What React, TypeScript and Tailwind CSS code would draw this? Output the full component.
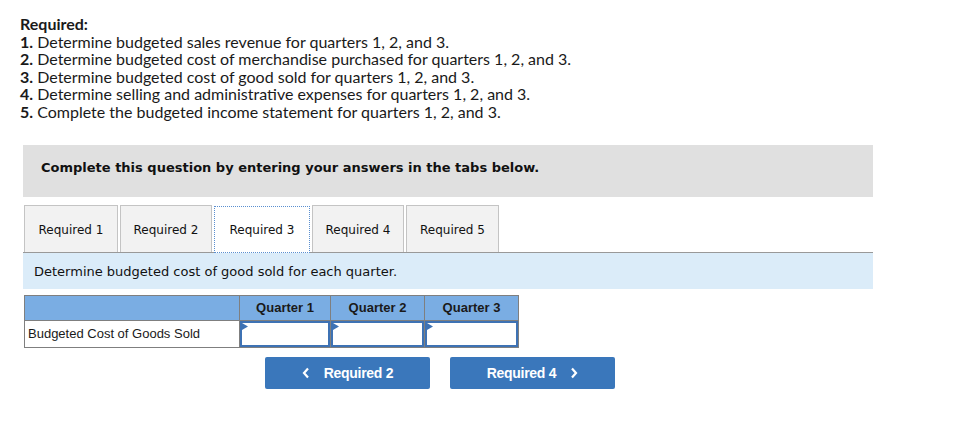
import React from "react";

const lines: [string, string][] = [
  ["1.", "Determine budgeted sales revenue for quarters 1, 2, and 3."],
  ["2.", "Determine budgeted cost of merchandise purchased for quarters 1, 2, and 3."],
  ["3.", "Determine budgeted cost of good sold for quarters 1, 2, and 3."],
  ["4.", "Determine selling and administrative expenses for quarters 1, 2, and 3."],
  ["5.", "Complete the budgeted income statement for quarters 1, 2, and 3."],
];

function InputCell({ w }: { w: string }) {
  return (
    <td className={`${w} p-0 border border-[#7f7f7f] h-[27px] bg-white`}>
      <div className="relative h-full border-2 border-[#3e72b4] bg-white">
        <svg className="absolute left-0 top-0" width="6" height="7" viewBox="0 0 6 7">
          <polygon points="0,0 6,3.5 0,7" fill="#3e72b4" />
        </svg>
      </div>
    </td>
  );
}

export default function App() {
  const tabs = ["Required 1", "Required 2", "Required 3", "Required 4", "Required 5"];
  return (
    <div className="w-[957px] h-[422px] bg-white text-[#222]">
      <div className="pt-[15px] pl-[20px] text-[16px] leading-[17.5px] text-[#1a1a1a]" style={{ fontFamily: "Lato, 'Open Sans', sans-serif" }}>
        <div className="font-bold">Required:</div>
        {lines.map(([n, t]) => (
          <div key={n}>
            <span className="font-bold">{n}</span> {t}
          </div>
        ))}
      </div>

      <div className="ml-[23px] w-[850px]" style={{ fontFamily: "'DejaVu Sans', Verdana, sans-serif" }}>
        <div className="mt-[25px] h-[52px] bg-[#e0e0e0] pt-[15px] pl-[18px]">
          <span className="block font-bold text-[13px] leading-[16px] text-[#111]">Complete this question by entering your answers in the tabs below.</span>
        </div>

        <div className="mt-[8px] flex items-end border-b border-[#999] pl-[1px] gap-[2px]">
          {tabs.map((t, i) =>
            i === 2 ? (
              <div
                key={t}
                className="h-[47px] w-[96px] bg-white flex items-center justify-center text-[12px] text-[#111] border border-dotted border-[#5a8fd0] -mb-[1px]"
              >
                {t}
              </div>
            ) : (
              <div
                key={t}
                className={`h-[47px] ${i === 0 ? "w-[94px]" : i === 1 ? "w-[92px]" : i === 3 ? "w-[92px]" : "w-[93px]"} bg-[#f2f2f2] flex items-center justify-center pt-[1px] text-[12px] text-[#111] border border-b-0 border-[#c4c4c4]`}
              >
                {t}
              </div>
            )
          )}
        </div>

        <div className="h-[36px] bg-[#dbecf9] pt-[11px] pl-[11px]">
          <span className="block text-[13px] leading-[16px] text-[#111]">Determine budgeted cost of good sold for each quarter.</span>
        </div>

        <table className="mt-[6px] ml-[1px] border-collapse" style={{ fontFamily: "'Liberation Sans', Arial, sans-serif" }}>
          <thead>
            <tr className="bg-[#7aade3] h-[25px]">
              <th className="w-[215px] border border-[#7f7f7f] p-0"></th>
              <th className="w-[91px] border border-[#7f7f7f] p-0 text-[13px] font-bold text-[#1a1a1a]">Quarter 1</th>
              <th className="w-[94px] border border-[#7f7f7f] p-0 text-[13px] font-bold text-[#1a1a1a]">Quarter 2</th>
              <th className="w-[94px] border border-[#7f7f7f] p-0 text-[13px] font-bold text-[#1a1a1a]">Quarter 3</th>
            </tr>
          </thead>
          <tbody>
            <tr>
              <td className="w-[215px] border border-[#7f7f7f] h-[27px] pl-[3px] text-[13px] text-[#1a1a1a] bg-white">Budgeted Cost of Goods Sold</td>
              <InputCell w="w-[91px]" />
              <InputCell w="w-[94px]" />
              <InputCell w="w-[94px]" />
            </tr>
          </tbody>
        </table>

        <div className="mt-[9px] ml-[242px] flex gap-[20px]" style={{ fontFamily: "'Liberation Sans', Arial, sans-serif" }}>
          <button className="w-[165px] h-[32px] rounded-[2px] bg-[#3a77bb] text-white font-bold text-[14px] tracking-[-0.3px] flex items-center justify-center gap-[14px]">
            <svg width="8" height="12" viewBox="0 0 8 12"><path d="M6 1.5 L2 6 L6 10.5" stroke="white" strokeWidth="2.2" fill="none" /></svg>
            <span>Required 2</span>
          </button>
          <button className="w-[165px] h-[32px] rounded-[2px] bg-[#3a77bb] text-white font-bold text-[14px] tracking-[-0.3px] flex items-center justify-center gap-[14px]">
            <span>Required 4</span>
            <svg width="8" height="12" viewBox="0 0 8 12"><path d="M2 1.5 L6 6 L2 10.5" stroke="white" strokeWidth="2.2" fill="none" /></svg>
          </button>
        </div>
      </div>
    </div>
  );
}
